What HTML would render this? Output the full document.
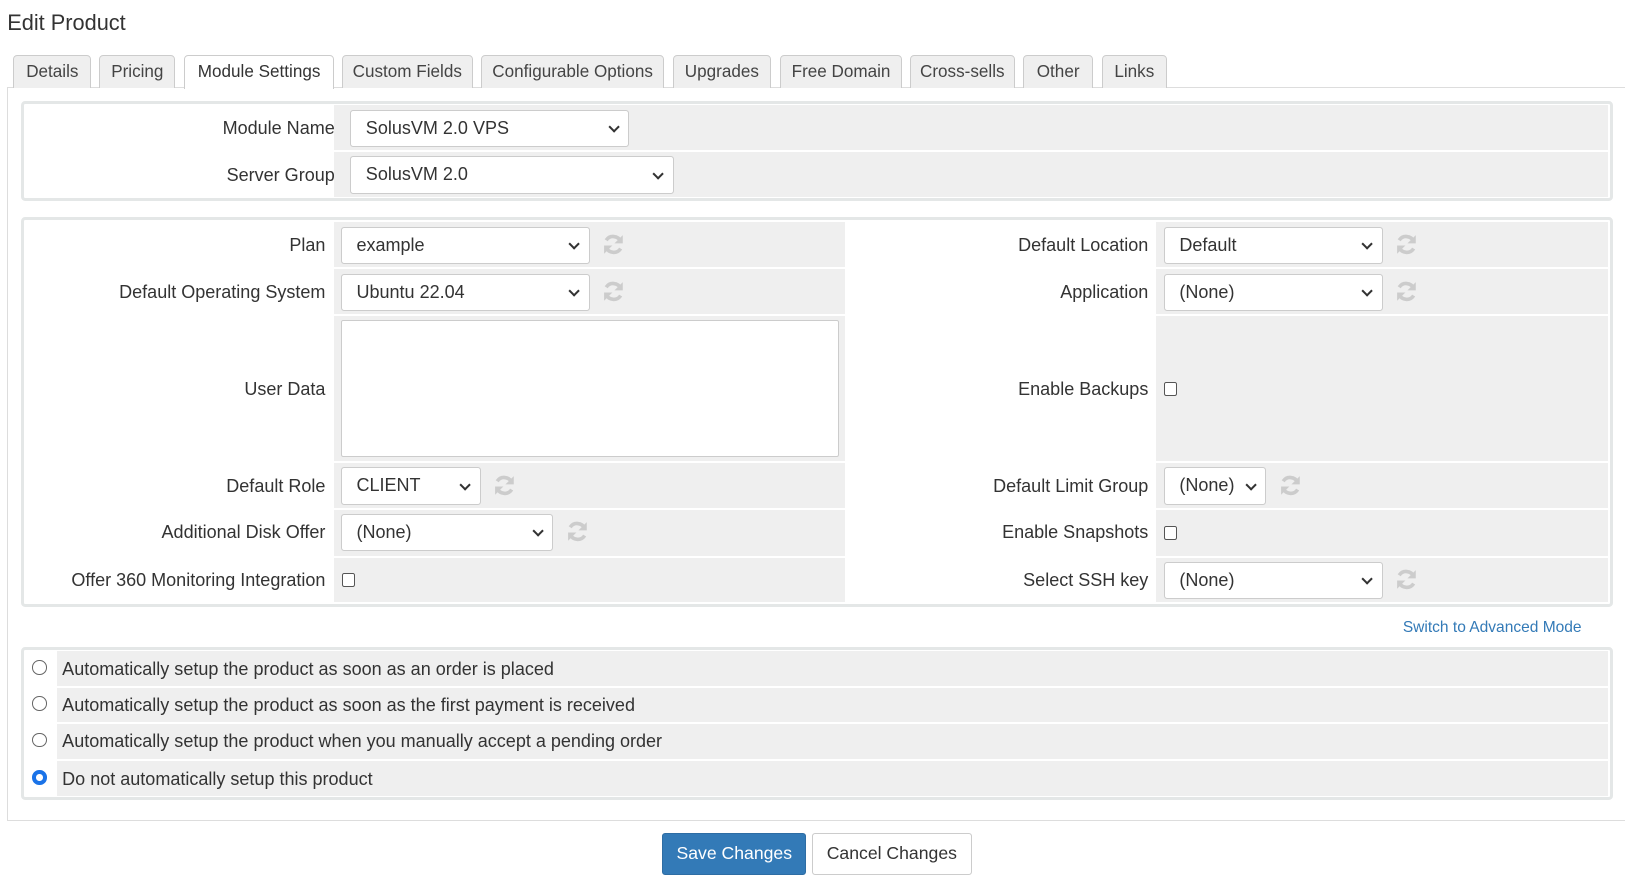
<!DOCTYPE html>
<html><head><meta charset="utf-8">
<style>
*{box-sizing:border-box;margin:0;padding:0}
html,body{width:1625px;height:880px;overflow:hidden;background:#fff}
#w{zoom:1.0364;position:relative;width:1568px;height:850px;font-family:"Liberation Sans",sans-serif;color:#333;font-size:17.4px}
.a{position:absolute}
.tab{position:absolute;top:53px;height:32px;border:1px solid #ccc;border-bottom:none;background:#efefef;border-radius:4px 4px 0 0;text-align:center;line-height:31px;color:#444;font-size:16.5px}
.tab.act{background:#fff;height:33px;color:#333}
.box{position:absolute;left:20px;width:1536px;border:3px solid #e4e7e7;border-radius:4px;background:#fff}
.g{position:absolute;background:#efefef}
.lb{position:absolute;text-align:right;white-space:nowrap}
.sel{position:absolute;height:36px;background:#fff;border:1px solid #ccc;border-radius:3px;padding-left:14px;line-height:34px}
.sel:after{content:"";position:absolute;right:10px;top:12px;width:6px;height:6px;border-right:2px solid #333;border-bottom:2px solid #333;transform:rotate(45deg)}
.cb{position:absolute;width:13px;height:13px;border:1px solid #555;border-radius:2px;background:#fff}
.rf{position:absolute;width:24px;height:24px}
.rad{position:absolute;left:31px;width:14px;height:14px;border:1px solid #666;border-radius:50%;background:#fff}
.rt{position:absolute;left:55px;width:1497px;background:#efefef;padding-left:5px}
</style></head><body><div id="w">
<div class="a" style="left:7px;top:10px;font-size:21px">Edit Product</div>
<div class="a" style="left:7px;top:84px;width:1580px;height:708px;border:1px solid #ddd"></div>
<div class="tab" style="left:13px;width:75px">Details</div>
<div class="tab" style="left:96px;width:73px">Pricing</div>
<div class="tab act" style="left:178px;width:144px">Module Settings</div>
<div class="tab" style="left:330px;width:126px">Custom Fields</div>
<div class="tab" style="left:464px;width:177px">Configurable Options</div>
<div class="tab" style="left:649px;width:95px">Upgrades</div>
<div class="tab" style="left:753px;width:117px">Free Domain</div>
<div class="tab" style="left:878px;width:101px">Cross-sells</div>
<div class="tab" style="left:987px;width:68px">Other</div>
<div class="tab" style="left:1063px;width:63px">Links</div>

<div class="box" style="top:97px;height:97px"></div>
<div class="g" style="left:322px;top:101px;width:1230px;height:44px"></div>
<div class="g" style="left:322px;top:147px;width:1230px;height:43px"></div>
<div class="lb" style="right:1245px;top:114px">Module Name</div>
<div class="lb" style="right:1245px;top:159px">Server Group</div>
<div class="sel" style="left:338px;top:106px;width:269px">SolusVM 2.0 VPS</div>
<div class="sel" style="left:338px;top:151px;width:312px">SolusVM 2.0</div>

<div class="box" style="top:209px;height:377px"></div>
<div class="g" style="left:322px;top:214px;width:493px;height:44px"></div>
<div class="g" style="left:322px;top:260px;width:493px;height:43px"></div>
<div class="g" style="left:322px;top:305px;width:493px;height:140px"></div>
<div class="g" style="left:322px;top:447px;width:493px;height:43px"></div>
<div class="g" style="left:322px;top:492px;width:493px;height:44px"></div>
<div class="g" style="left:322px;top:538px;width:493px;height:43px"></div>
<div class="g" style="left:1115px;top:214px;width:437px;height:44px"></div>
<div class="g" style="left:1115px;top:260px;width:437px;height:43px"></div>
<div class="g" style="left:1115px;top:305px;width:437px;height:140px"></div>
<div class="g" style="left:1115px;top:447px;width:437px;height:43px"></div>
<div class="g" style="left:1115px;top:492px;width:437px;height:44px"></div>
<div class="g" style="left:1115px;top:538px;width:437px;height:43px"></div>

<div class="lb" style="right:1254px;top:227px">Plan</div>
<div class="lb" style="right:1254px;top:272px">Default Operating System</div>
<div class="lb" style="right:1254px;top:366px">User Data</div>
<div class="lb" style="right:1254px;top:459px">Default Role</div>
<div class="lb" style="right:1254px;top:504px">Additional Disk Offer</div>
<div class="lb" style="right:1254px;top:550px">Offer 360 Monitoring Integration</div>
<div class="lb" style="right:460px;top:227px">Default Location</div>
<div class="lb" style="right:460px;top:272px">Application</div>
<div class="lb" style="right:460px;top:366px">Enable Backups</div>
<div class="lb" style="right:460px;top:459px">Default Limit Group</div>
<div class="lb" style="right:460px;top:504px">Enable Snapshots</div>
<div class="lb" style="right:460px;top:550px">Select SSH key</div>

<div class="sel" style="left:329px;top:219px;width:240px">example</div>
<div class="sel" style="left:329px;top:264px;width:240px">Ubuntu 22.04</div>
<div class="a" style="left:329px;top:309px;width:481px;height:132px;background:#fff;border:1px solid #ccc;border-radius:2px"></div>
<div class="sel" style="left:329px;top:451px;width:135px">CLIENT</div>
<div class="sel" style="left:329px;top:496px;width:205px">(None)</div>
<div class="cb" style="left:330px;top:553px"></div>
<div class="sel" style="left:1123px;top:219px;width:211px">Default</div>
<div class="sel" style="left:1123px;top:264px;width:211px">(None)</div>
<div class="cb" style="left:1123px;top:369px"></div>
<div class="sel" style="left:1123px;top:451px;width:99px">(None)</div>
<div class="cb" style="left:1123px;top:508px"></div>
<div class="sel" style="left:1123px;top:542px;width:211px">(None)</div>

<svg width="0" height="0" style="position:absolute"><defs><g id="r"><path d="M19 9A8 8 0 0 0 5 8" fill="none" stroke="#ccc" stroke-width="3.5"/><path d="M21 3v8h-8z" fill="#ccc"/><path d="M5 15a8 8 0 0 0 14 1" fill="none" stroke="#ccc" stroke-width="3.5"/><path d="M3 21v-8h8z" fill="#ccc"/></g></defs></svg>
<svg class="rf" style="left:580px;top:224px" viewBox="0 0 24 24"><use href="#r"/></svg>
<svg class="rf" style="left:580px;top:269px" viewBox="0 0 24 24"><use href="#r"/></svg>
<svg class="rf" style="left:475px;top:456px" viewBox="0 0 24 24"><use href="#r"/></svg>
<svg class="rf" style="left:545px;top:501px" viewBox="0 0 24 24"><use href="#r"/></svg>
<svg class="rf" style="left:1345px;top:224px" viewBox="0 0 24 24"><use href="#r"/></svg>
<svg class="rf" style="left:1345px;top:269px" viewBox="0 0 24 24"><use href="#r"/></svg>
<svg class="rf" style="left:1233px;top:456px" viewBox="0 0 24 24"><use href="#r"/></svg>
<svg class="rf" style="left:1345px;top:547px" viewBox="0 0 24 24"><use href="#r"/></svg>

<div class="a" style="right:42px;top:597px;font-size:15px;color:#337ab7">Switch to Advanced Mode</div>

<div class="box" style="top:624px;height:148px"></div>
<div class="rt" style="top:628px;height:34px;line-height:35px">Automatically setup the product as soon as an order is placed</div>
<div class="rt" style="top:664px;height:33px;line-height:34px">Automatically setup the product as soon as the first payment is received</div>
<div class="rt" style="top:699px;height:33px;line-height:34px">Automatically setup the product when you manually accept a pending order</div>
<div class="rt" style="top:734px;height:34px;line-height:35px">Do not automatically setup this product</div>
<div class="rad" style="top:637px"></div>
<div class="rad" style="top:672px"></div>
<div class="rad" style="top:707px"></div>
<div class="rad" style="top:743px;border:4px solid #1a73e8"></div>

<div class="a" style="left:639px;top:804px;width:139px;height:40px;background:#337ab7;border:1px solid #2e6da4;border-radius:3px;color:#fff;text-align:center;line-height:38px;font-size:17px">Save Changes</div>
<div class="a" style="left:783px;top:804px;width:155px;height:40px;background:#fff;border:1px solid #ccc;border-radius:3px;text-align:center;line-height:38px;font-size:17px">Cancel Changes</div>
</div></body></html>
